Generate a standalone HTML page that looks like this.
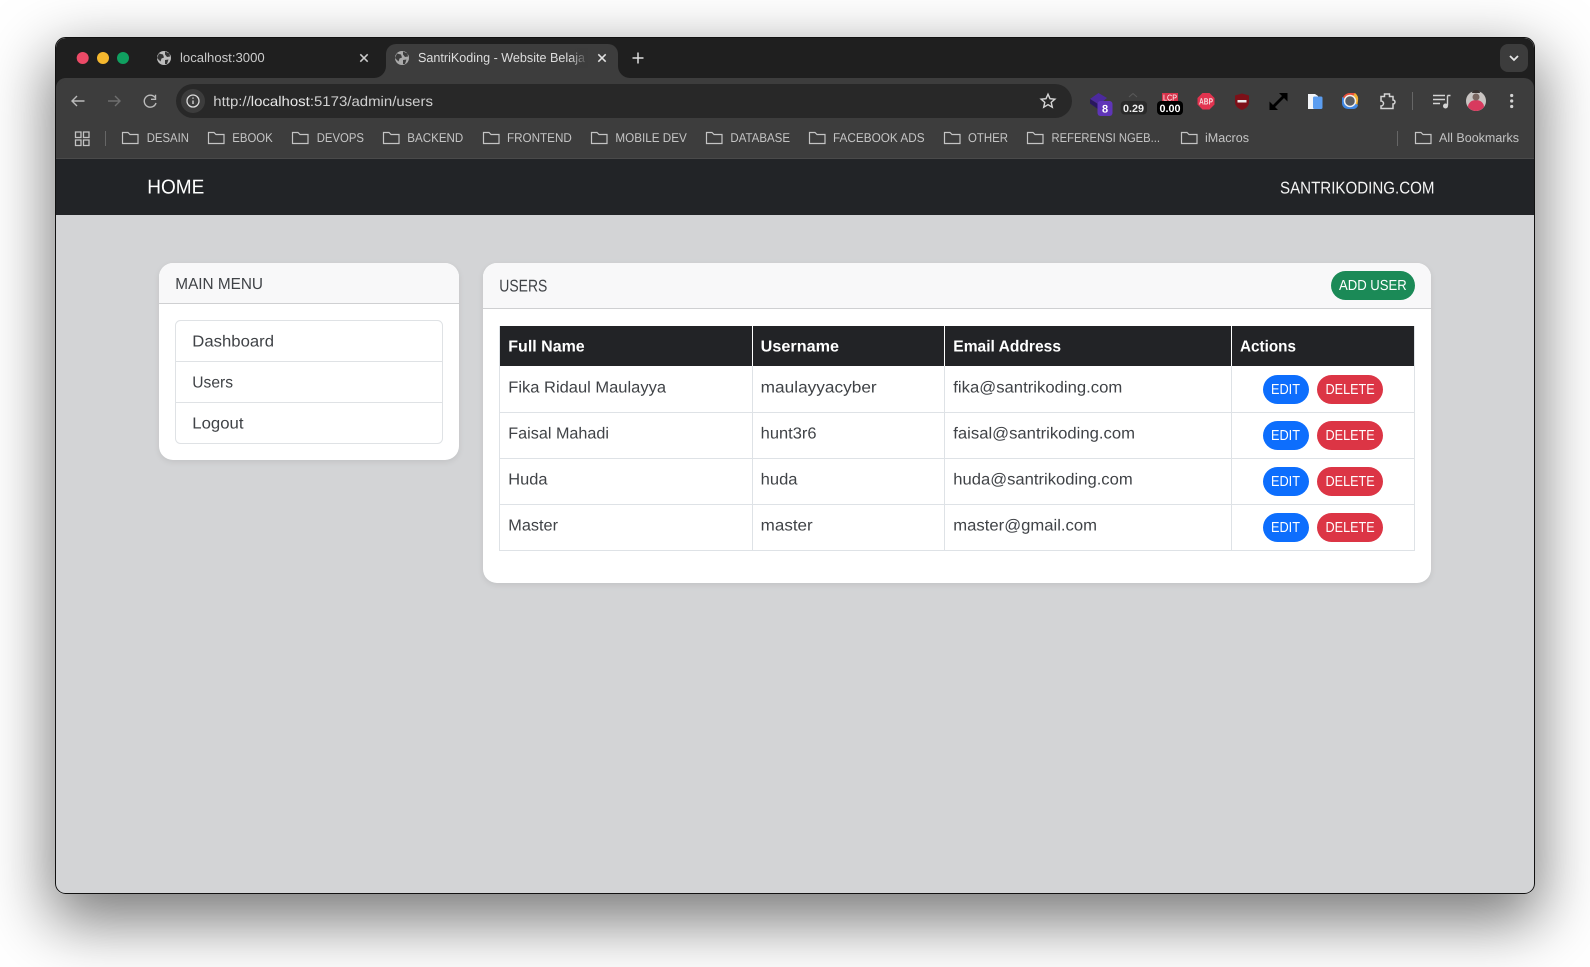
<!DOCTYPE html>
<html><head><meta charset="utf-8"><title>Users</title>
<style>
html,body{margin:0;padding:0;background:#fff;width:1590px;height:967px;overflow:hidden}
#w{position:absolute;left:55px;top:37px;width:1480px;height:857px;border-radius:10px;box-shadow:0 23px 62px 5px rgba(0,0,0,.52)}
svg{position:absolute;left:0;top:0;filter:blur(.3px)}
text{font-family:"Liberation Sans",sans-serif;text-rendering:geometricPrecision}
.tb{font-size:14px;fill:#c9c9c9}
.bm{font-size:12.8px;fill:#c4c4c4}
.b{font-size:16px;fill:#404347}
.h{font-size:16px;font-weight:bold;fill:#fff}
.btn{font-size:14.5px;fill:#fff}
.f{fill:none;stroke:#c4c4c4;stroke-width:1.2}
</style></head><body>
<div id="w"></div>
<svg width="1590" height="967" viewBox="0 0 1590 967" xmlns="http://www.w3.org/2000/svg">
<defs><linearGradient id="fd" x1="0" x2="1"><stop offset="0" stop-color="#3c3c3c" stop-opacity="0"/><stop offset="1" stop-color="#3c3c3c"/></linearGradient></defs>
<!-- window -->
<rect x="55.500" y="37.500" width="1479" height="856" rx="10" fill="#d3d4d6" stroke="#111"/>
<path d="M56 78V48a10 10 0 0 1 10-10H1524a10 10 0 0 1 10 10V90H56z" fill="#1f1f1f"/>
<path d="M56 159V88a10 10 0 0 1 10-10H1524a10 10 0 0 1 10 10V159z" fill="#3d3d3d"/>
<path d="M374 78a12 12 0 0 0 12-12V54a10 10 0 0 1 10-10H608a10 10 0 0 1 10 10V66a12 12 0 0 0 12 12z" fill="#3d3d3d"/>
<path d="M56 88a10 10 0 0 1 10-10H374V78H66z" fill="#3d3d3d"/>
<rect x="56" y="158" width="1478" height="1" fill="#4a4a4a"/>
<rect x="56" y="159" width="1478" height="56" fill="#222427"/>
<!-- traffic lights -->
<circle cx="82.700" cy="58" r="6" fill="#ec4a67"/><circle cx="103" cy="58" r="6" fill="#f5b82e"/><circle cx="123" cy="58" r="6" fill="#10a060"/>
<!-- tab 1 -->
<circle cx="164" cy="58" r="7" fill="#bdbdbd"/><path d="M159 53.500l4 1 1 3-2.500 1-1 3-3.500-3.500zM165 51.500l4.500 2 .5 3-3 .5-2-2.500zM165 60l3.500-.5-1.500 4.500-2 0z" fill="#333"/>
<text x="180" y="62" class="tb" textLength="84.700" lengthAdjust="spacingAndGlyphs" style="font-size:13px">localhost:3000</text>
<path d="M360.300 54.300l7.400 7.400M367.700 54.300l-7.400 7.400" stroke="#ccc" stroke-width="1.500"/>
<!-- tab 2 -->
<circle cx="402" cy="58" r="7" fill="#aaa"/><path d="M397 53.500l4 1 1 3-2.500 1-1 3-3.500-3.500zM403 51.500l4.500 2 .5 3-3 .5-2-2.500zM403 60l3.500-.5-1.500 4.500-2 0z" fill="#3c3c3c"/>
<text x="418" y="62" class="tb" textLength="167" lengthAdjust="spacingAndGlyphs" style="font-size:13px;fill:#ddd">SantriKoding - Website Belaja</text>
<rect x="570" y="48" width="18" height="20" fill="url(#fd)"/>
<path d="M598.300 54.300l7.400 7.400M605.700 54.300l-7.400 7.400" stroke="#e4e4e4" stroke-width="1.500"/>
<path d="M638 52.500v11M632.500 58h11" stroke="#ddd" stroke-width="1.500"/>
<!-- chevron -->
<rect x="1500" y="44" width="28" height="28" rx="8" fill="#3c3c3c"/><path d="M1510 56l4 4 4-4" fill="none" stroke="#e6e6e6" stroke-width="1.800"/>
<!-- nav buttons -->
<path d="M84.500 101H72.500M77 96l-5 5 5 5" fill="none" stroke="#bbb" stroke-width="1.400"/>
<path d="M108 101h11.500M115 96l5 5-5 5" fill="none" stroke="#6f6f6f" stroke-width="1.400"/>
<path d="M155 97.500a6 6 0 1 0 1 5.500M155.500 94.800v4.500h-4.500" fill="none" stroke="#bbb" stroke-width="1.400"/>
<!-- omnibox -->
<rect x="176" y="84" width="896" height="34" rx="17" fill="#282828"/>
<circle cx="193" cy="101" r="12" fill="#3c3c3c"/>
<circle cx="193" cy="101" r="6" fill="none" stroke="#ddd" stroke-width="1.300"/><path d="M193 100.500v3.500M193 97.500v1.300" stroke="#ddd" stroke-width="1.300"/>
<text x="213.300" y="106" class="tb" textLength="219.700" lengthAdjust="spacingAndGlyphs" style="fill:#cfcfcf">http://<tspan fill="#e6e6e6">localhost</tspan>:5173/admin/users</text>
<path d="M1048 94.200l2 4.500 4.900.5-3.700 3.200 1.100 4.800-4.300-2.500-4.300 2.500 1.100-4.800-3.700-3.200 4.900-.5z" fill="none" stroke="#d6d6d6" stroke-width="1.400"/>
<!-- extensions -->
<path d="M1090 99l8.500-6 8.500 5-8 6.500z" fill="#4c2a9e"/><path d="M1090 99l8.500 5.500v5l-8.500-6z" fill="#29175f"/>
<rect x="1097.500" y="101" width="15" height="15" rx="3" fill="#5f35b8"/>
<text x="1105" y="112.500" text-anchor="middle" style="font-size:11px;font-weight:bold;fill:#fff">8</text>
<path d="M1129 97l4-3.500 4 3.500" fill="none" stroke="#5a5a5a"/>
<rect x="1120.700" y="101" width="26.300" height="13.500" rx="4" fill="#2a2a2a"/>
<text x="1123" y="112" textLength="21" lengthAdjust="spacingAndGlyphs" style="font-size:10.500px;font-weight:bold;fill:#eee">0.29</text>
<rect x="1162" y="93" width="16" height="8" fill="#d8324a"/>
<text x="1163" y="100.500" textLength="14" lengthAdjust="spacingAndGlyphs" style="font-size:8.500px;fill:#fff">LCP</text>
<rect x="1157" y="101" width="26" height="14" rx="4" fill="#000"/>
<text x="1159.500" y="112" textLength="21" lengthAdjust="spacingAndGlyphs" style="font-size:10.500px;font-weight:bold;fill:#fff">0.00</text>
<path d="M1202.500 93h7l5 5v6.500l-5 5h-7l-5-5V98z" fill="#e2334f"/>
<text x="1199" y="104.500" textLength="14" lengthAdjust="spacingAndGlyphs" style="font-size:9px;font-weight:bold;fill:#f5d8dc">ABP</text>
<path d="M1235 95.500l7-2 7 2v6.500c0 4-3 6.500-7 8-4-1.500-7-4-7-8z" fill="#7d1018"/><rect x="1237.500" y="100" width="9" height="2.500" fill="#eee"/>
<path d="M1272 108l13-13" stroke="#000" stroke-width="2.800"/><path d="M1279 93h8.500v8.500zM1269.500 101.500v8.500h8.500z" fill="#000"/>
<path d="M1308 94h7l3 2v13h-10z" fill="#f3f5f8"/><rect x="1313" y="96.500" width="9.500" height="12.500" rx="1.500" fill="#5b9df0"/>
<path d="M1342 101a8 8 0 0 1 8-8h5l3 8z" fill="#e8503c"/><path d="M1355 93a8 8 0 0 1 3 8l-1 6-7-6z" fill="#f2b134"/><path d="M1342 97v7a6 6 0 0 0 6 5h6a5 5 0 0 0 4-4l-8-4z" fill="#3f87e4"/>
<circle cx="1350" cy="101" r="5.500" fill="#5a5d62" stroke="#f0f0f0" stroke-width="1.500"/>
<path d="M1381 96.500h3.500v-2.500h5v2.500h3.500v3.500a2 2 0 0 1 0 4v4.500h-12v-2.500a2.500 2.500 0 0 0 0-5z" fill="none" stroke="#d4d4d4" stroke-width="1.500"/>
<rect x="1412" y="92" width="1" height="18" fill="#666"/>
<path d="M1433 95.500h12M1433 99.500h12M1433 103.500h7" stroke="#d4d4d4" stroke-width="1.400"/>
<path d="M1447.500 95.500v10M1447.500 95.500h3" stroke="#d4d4d4" stroke-width="1.400" fill="none"/><circle cx="1445.500" cy="106" r="2.500" fill="#d4d4d4"/>
<circle cx="1476" cy="101" r="10" fill="#c9c4c2"/><path d="M1468 107a8 7 0 0 1 16 0 10 10 0 0 1-16 0z" fill="#d83a5e"/><circle cx="1476" cy="97" r="3.500" fill="#7a6660"/><path d="M1472 93a4 3 0 0 1 8 0z" fill="#3a3230"/>
<circle cx="1511.700" cy="95.500" r="1.600" fill="#d4d4d4"/><circle cx="1511.700" cy="101" r="1.600" fill="#d4d4d4"/><circle cx="1511.700" cy="106.500" r="1.600" fill="#d4d4d4"/>
<!-- bookmarks -->
<path d="M75.500 132h5.500v5.500h-5.500zM83.500 132H89v5.500h-5.500zM75.500 140h5.500v5.500h-5.500zM83.500 140H89v5.500h-5.500z" fill="none" stroke="#c4c4c4" stroke-width="1.300"/>
<rect x="105" y="131" width="1" height="15" fill="#666"/>
<path class="f" d="M122.500 132.500h5.500l2 2h8v9h-15.500z"/><text x="146.700" y="142" class="bm" textLength="42.300" lengthAdjust="spacingAndGlyphs">DESAIN</text>
<path class="f" d="M208.500 132.500h5.500l2 2h8v9h-15.500z"/><text x="232.300" y="142" class="bm" textLength="40.400" lengthAdjust="spacingAndGlyphs">EBOOK</text>
<path class="f" d="M292.500 132.500h5.500l2 2h8v9h-15.500z"/><text x="316.700" y="142" class="bm" textLength="47.300" lengthAdjust="spacingAndGlyphs">DEVOPS</text>
<path class="f" d="M383.500 132.500h5.500l2 2h8v9h-15.500z"/><text x="407.300" y="142" class="bm" textLength="56" lengthAdjust="spacingAndGlyphs">BACKEND</text>
<path class="f" d="M483.500 132.500h5.500l2 2h8v9h-15.500z"/><text x="507" y="142" class="bm" textLength="64.800" lengthAdjust="spacingAndGlyphs">FRONTEND</text>
<path class="f" d="M591.500 132.500h5.500l2 2h8v9h-15.500z"/><text x="615.400" y="142" class="bm" textLength="71.400" lengthAdjust="spacingAndGlyphs">MOBILE DEV</text>
<path class="f" d="M706.500 132.500h5.500l2 2h8v9h-15.500z"/><text x="730.400" y="142" class="bm" textLength="59.600" lengthAdjust="spacingAndGlyphs">DATABASE</text>
<path class="f" d="M809.500 132.500h5.500l2 2h8v9h-15.500z"/><text x="833" y="142" class="bm" textLength="91.600" lengthAdjust="spacingAndGlyphs">FACEBOOK ADS</text>
<path class="f" d="M944.500 132.500h5.500l2 2h8v9h-15.500z"/><text x="968" y="142" class="bm" textLength="40" lengthAdjust="spacingAndGlyphs">OTHER</text>
<path class="f" d="M1027.500 132.500h5.500l2 2h8v9h-15.500z"/><text x="1051.500" y="142" class="bm" textLength="108.500" lengthAdjust="spacingAndGlyphs">REFERENSI NGEB...</text>
<path class="f" d="M1181.500 132.500h5.500l2 2h8v9h-15.500z"/><text x="1205" y="142" class="bm" textLength="44" lengthAdjust="spacingAndGlyphs">iMacros</text>
<rect x="1397" y="131" width="1" height="15" fill="#666"/>
<path class="f" d="M1415.500 132.500h5.500l2 2h8v9h-15.500z"/><text x="1439" y="142" class="bm" textLength="80" lengthAdjust="spacingAndGlyphs">All Bookmarks</text>
<!-- navbar -->
<text x="147.300" y="193.700" textLength="57" lengthAdjust="spacingAndGlyphs" style="font-size:20px;fill:#fff">HOME</text>
<text x="1280" y="193.500" textLength="154.500" lengthAdjust="spacingAndGlyphs" style="font-size:17px;fill:#f4f4f4">SANTRIKODING.COM</text>
<!-- sidebar card -->
<rect x="159" y="263" width="300" height="197" rx="14" fill="#fff" style="filter:drop-shadow(0 2px 3px rgba(0,0,0,.08))"/>
<path d="M159 303V277a14 14 0 0 1 14-14H445a14 14 0 0 1 14 14v26z" fill="#f8f8f9"/>
<rect x="159" y="303" width="300" height="1" fill="#cfd0d2"/>
<text x="175.300" y="289" textLength="87.700" lengthAdjust="spacingAndGlyphs" class="b">MAIN MENU</text>
<rect x="175.500" y="320.500" width="267" height="123" rx="5" fill="#fff" stroke="#dfe2e5"/>
<rect x="176" y="361" width="266" height="1" fill="#dfe2e5"/><rect x="176" y="402" width="266" height="1" fill="#dfe2e5"/>
<text x="192.300" y="346.700" textLength="81.700" lengthAdjust="spacingAndGlyphs" class="b">Dashboard</text>
<text x="192.300" y="387.700" textLength="40.700" lengthAdjust="spacingAndGlyphs" class="b">Users</text>
<text x="192.300" y="428.700" textLength="51.200" lengthAdjust="spacingAndGlyphs" class="b">Logout</text>
<!-- main card -->
<rect x="483" y="263" width="948" height="320" rx="14" fill="#fff" style="filter:drop-shadow(0 2px 3px rgba(0,0,0,.08))"/>
<path d="M483 309V277a14 14 0 0 1 14-14H1417a14 14 0 0 1 14 14v32z" fill="#f8f8f9"/>
<rect x="483" y="308" width="948" height="1" fill="#cfd0d2"/>
<text x="499.300" y="291.700" textLength="48" lengthAdjust="spacingAndGlyphs" class="b" style="font-size:17px">USERS</text>
<rect x="1331" y="271" width="84" height="29" rx="14.500" fill="#1b8a57"/>
<text x="1339" y="290" textLength="67.700" lengthAdjust="spacingAndGlyphs" class="btn">ADD USER</text>
<!-- table -->
<rect x="499.500" y="326.500" width="915" height="224" fill="#fff" stroke="#dee2e6"/>
<rect x="500" y="326" width="914" height="40" fill="#222326"/>
<path d="M752.500 326v225M944.500 326v225M1231.500 326v225M499.500 412.500h915M499.500 458.500h915M499.500 504.500h915" stroke="#dee2e6" fill="none"/>
<path d="M752.500 326v40M944.500 326v40M1231.500 326v40" stroke="#fff"/>
<text x="508.300" y="351.700" textLength="76.400" lengthAdjust="spacingAndGlyphs" class="h">Full Name</text>
<text x="760.700" y="351.700" textLength="78.300" lengthAdjust="spacingAndGlyphs" class="h">Username</text>
<text x="953.300" y="351.700" textLength="107.700" lengthAdjust="spacingAndGlyphs" class="h">Email Address</text>
<text x="1240" y="351.700" textLength="56" lengthAdjust="spacingAndGlyphs" class="h">Actions</text>
<text x="508.300" y="392.700" textLength="157.700" lengthAdjust="spacingAndGlyphs" class="b">Fika Ridaul Maulayya</text>
<text x="760.700" y="392.700" textLength="116" lengthAdjust="spacingAndGlyphs" class="b">maulayyacyber</text>
<text x="953.300" y="392.700" textLength="169" lengthAdjust="spacingAndGlyphs" class="b">fika@santrikoding.com</text>
<text x="508.300" y="438.700" textLength="100.700" lengthAdjust="spacingAndGlyphs" class="b">Faisal Mahadi</text>
<text x="760.700" y="438.700" textLength="55.800" lengthAdjust="spacingAndGlyphs" class="b">hunt3r6</text>
<text x="953.300" y="438.700" textLength="181.700" lengthAdjust="spacingAndGlyphs" class="b">faisal@santrikoding.com</text>
<text x="508.300" y="484.700" textLength="39.200" lengthAdjust="spacingAndGlyphs" class="b">Huda</text>
<text x="760.700" y="484.700" textLength="36.800" lengthAdjust="spacingAndGlyphs" class="b">huda</text>
<text x="953.300" y="484.700" textLength="179.400" lengthAdjust="spacingAndGlyphs" class="b">huda@santrikoding.com</text>
<text x="508.300" y="530.700" textLength="49.700" lengthAdjust="spacingAndGlyphs" class="b">Master</text>
<text x="760.700" y="530.700" textLength="52" lengthAdjust="spacingAndGlyphs" class="b">master</text>
<text x="953.300" y="530.700" textLength="143.700" lengthAdjust="spacingAndGlyphs" class="b">master@gmail.com</text>
<!-- buttons -->
<rect x="1263" y="375" width="46" height="29" rx="14.500" fill="#0d6efd"/><rect x="1317" y="375" width="66" height="29" rx="14.500" fill="#dc3545"/>
<text x="1271" y="394" textLength="29" lengthAdjust="spacingAndGlyphs" class="btn">EDIT</text><text x="1325.500" y="394" textLength="49.200" lengthAdjust="spacingAndGlyphs" class="btn">DELETE</text>
<rect x="1263" y="421" width="46" height="29" rx="14.500" fill="#0d6efd"/><rect x="1317" y="421" width="66" height="29" rx="14.500" fill="#dc3545"/>
<text x="1271" y="440" textLength="29" lengthAdjust="spacingAndGlyphs" class="btn">EDIT</text><text x="1325.500" y="440" textLength="49.200" lengthAdjust="spacingAndGlyphs" class="btn">DELETE</text>
<rect x="1263" y="467" width="46" height="29" rx="14.500" fill="#0d6efd"/><rect x="1317" y="467" width="66" height="29" rx="14.500" fill="#dc3545"/>
<text x="1271" y="486" textLength="29" lengthAdjust="spacingAndGlyphs" class="btn">EDIT</text><text x="1325.500" y="486" textLength="49.200" lengthAdjust="spacingAndGlyphs" class="btn">DELETE</text>
<rect x="1263" y="513" width="46" height="29" rx="14.500" fill="#0d6efd"/><rect x="1317" y="513" width="66" height="29" rx="14.500" fill="#dc3545"/>
<text x="1271" y="532" textLength="29" lengthAdjust="spacingAndGlyphs" class="btn">EDIT</text><text x="1325.500" y="532" textLength="49.200" lengthAdjust="spacingAndGlyphs" class="btn">DELETE</text>
</svg>
</body></html>
